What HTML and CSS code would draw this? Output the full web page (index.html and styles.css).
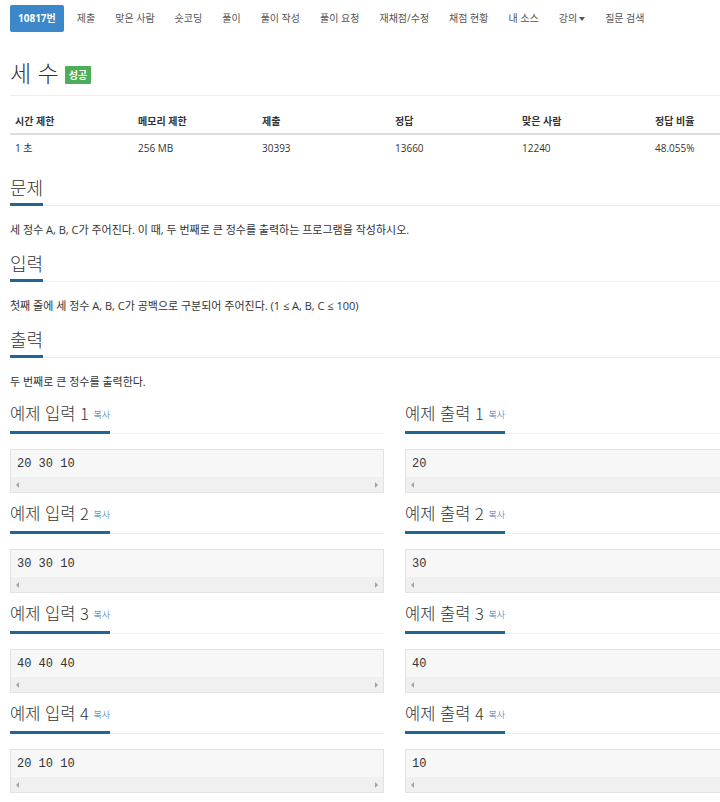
FILE: index.html
```html
<!DOCTYPE html>
<html lang="ko">
<head>
    <meta charset="UTF-8">
    <meta name="viewport" content="width=device-width, initial-scale=1.0">
    <title>세 수</title>
    <link rel="stylesheet" href="styles.css">
</head>
<body>
    <div class="page">
        <ul class="nav">
            <li class="active"><a href="#">10817번</a></li>
            <li><a href="#">제출</a></li>
            <li><a href="#">맞은 사람</a></li>
            <li><a href="#">숏코딩</a></li>
            <li><a href="#">풀이</a></li>
            <li><a href="#">풀이 작성</a></li>
            <li><a href="#">풀이 요청</a></li>
            <li><a href="#">재채점/수정</a></li>
            <li><a href="#">채점 현황</a></li>
            <li><a href="#">내 소스</a></li>
            <li><a href="#">강의<span class="caret"></span></a></li>
            <li><a href="#">질문 검색</a></li>
        </ul>

        <div class="page-header">
            <h1>세 수 <span class="label-success">성공</span></h1>
        </div>

        <table class="info">
            <thead>
                <tr>
                    <th class="c1">시간 제한</th>
                    <th class="c2">메모리 제한</th>
                    <th class="c3">제출</th>
                    <th class="c4">정답</th>
                    <th class="c5">맞은 사람</th>
                    <th>정답 비율</th>
                </tr>
            </thead>
            <tbody>
                <tr>
                    <td>1 초</td>
                    <td>256 MB</td>
                    <td>30393</td>
                    <td>13660</td>
                    <td>12240</td>
                    <td>48.055%</td>
                </tr>
            </tbody>
        </table>

        <section class="problem-section">
            <div class="headline"><h2>문제</h2></div>
            <p>세 정수 A, B, C가 주어진다. 이 때, 두 번째로 큰 정수를 출력하는 프로그램을 작성하시오.</p>
        </section>

        <section class="problem-section">
            <div class="headline"><h2>입력</h2></div>
            <p>첫째 줄에 세 정수 A, B, C가 공백으로 구분되어 주어진다. (1 ≤ A, B, C ≤ 100)</p>
        </section>

        <section class="problem-section">
            <div class="headline"><h2>출력</h2></div>
            <p>두 번째로 큰 정수를 출력한다.</p>
        </section>

        <div class="samples">
            <div class="sample">
                <div class="headline"><h2>예제 입력 1 <a class="copy" href="#">복사</a></h2></div>
                <div class="sample-box"><pre>20 30 10</pre><div class="scrollbar"><span class="arr-l"></span><span class="arr-r"></span></div></div>
            </div>
            <div class="sample">
                <div class="headline"><h2>예제 출력 1 <a class="copy" href="#">복사</a></h2></div>
                <div class="sample-box"><pre>20</pre><div class="scrollbar"><span class="arr-l"></span><span class="arr-r"></span></div></div>
            </div>
            <div class="sample">
                <div class="headline"><h2>예제 입력 2 <a class="copy" href="#">복사</a></h2></div>
                <div class="sample-box"><pre>30 30 10</pre><div class="scrollbar"><span class="arr-l"></span><span class="arr-r"></span></div></div>
            </div>
            <div class="sample">
                <div class="headline"><h2>예제 출력 2 <a class="copy" href="#">복사</a></h2></div>
                <div class="sample-box"><pre>30</pre><div class="scrollbar"><span class="arr-l"></span><span class="arr-r"></span></div></div>
            </div>
            <div class="sample">
                <div class="headline"><h2>예제 입력 3 <a class="copy" href="#">복사</a></h2></div>
                <div class="sample-box"><pre>40 40 40</pre><div class="scrollbar"><span class="arr-l"></span><span class="arr-r"></span></div></div>
            </div>
            <div class="sample">
                <div class="headline"><h2>예제 출력 3 <a class="copy" href="#">복사</a></h2></div>
                <div class="sample-box"><pre>40</pre><div class="scrollbar"><span class="arr-l"></span><span class="arr-r"></span></div></div>
            </div>
            <div class="sample">
                <div class="headline"><h2>예제 입력 4 <a class="copy" href="#">복사</a></h2></div>
                <div class="sample-box"><pre>20 10 10</pre><div class="scrollbar"><span class="arr-l"></span><span class="arr-r"></span></div></div>
            </div>
            <div class="sample">
                <div class="headline"><h2>예제 출력 4 <a class="copy" href="#">복사</a></h2></div>
                <div class="sample-box"><pre>10</pre><div class="scrollbar"><span class="arr-l"></span><span class="arr-r"></span></div></div>
            </div>
        </div>
    </div>
</body>
</html>
```
FILE: styles.css
```css
html, body {
    margin: 0;
    padding: 0;
    overflow: hidden;
}

body {
    font-family: "Open Sans", "Noto Sans CJK KR", sans-serif;
    font-size: 11px;
    color: #333;
    background-color: #fff;
}

.page {
    width: 710px;
    padding-left: 10px;
}

/* 상단 탭 */
.nav {
    list-style: none;
    margin: 0;
    padding: 5px 0 0;
    display: flex;
    height: 32px;
}

.nav li a,
.nav li a:hover,
.nav li a:visited {
    display: block;
    height: 27px;
    line-height: 27px;
    padding: 0 10px;
    color: #555;
    text-decoration: none;
    font-size: 10px;
    white-space: nowrap;
}

.nav li.active {
    margin-right: 3px;
}

.nav li.active a {
    background-color: #3b87c9;
    color: #fff;
    font-weight: bold;
    border-radius: 2px;
    padding: 0 8px;
}

.caret {
    display: inline-block;
    width: 0;
    height: 0;
    margin-left: 2px;
    vertical-align: middle;
    border-top: 4px solid #555;
    border-left: 3px solid transparent;
    border-right: 3px solid transparent;
}

/* 제목 */
.page-header {
    border-bottom: 1px solid #eee;
    padding-bottom: 8px;
    margin-top: 20px;
}

.page-header h1 {
    margin: 0;
    font-size: 23px;
    font-weight: 300;
    line-height: 30px;
    display: flex;
    align-items: center;
    gap: 6px;
    font-family: "Noto Sans CJK KR", sans-serif;
}

.label-success {
    display: inline-block;
    background-color: #4cae58;
    color: #fff;
    font-size: 10px;
    font-weight: bold;
    padding: 1px 4px;
    line-height: 16px;
    margin-top: 5px;
    border-radius: 1px;
}

/* 정보 표 */
.info {
    width: 710px;
    border-collapse: collapse;
    margin-top: 13px;
    font-size: 10px;
}

.info th {
    text-align: left;
    font-weight: bold;
    padding: 4px 5px 5px;
    border-bottom: 2px solid #ddd;
    color: #333;
}

.info td {
    padding: 5px 5px 6px;
}

.info .c1 { width: 113px; }
.info .c2 { width: 114px; }
.info .c3 { width: 123px; }
.info .c4 { width: 117px; }
.info .c5 { width: 123px; }

/* 섹션 */
.headline {
    border-bottom: 1px solid #eee;
    margin-top: 11px;
}

.headline h2 {
    display: inline-block;
    margin: 0 0 -1px;
    font-size: 18px;
    font-weight: 300;
    line-height: 28px;
    padding-bottom: 2px;
    border-bottom: 3px solid #1f6596;
    font-family: "Noto Sans CJK KR", sans-serif;
}

.problem-section:first-of-type .headline {
    margin-top: 12px;
}

.problem-section p {
    margin: 16px 0 0;
    line-height: 16px;
    font-size: 11px;
}

/* 예제 */
.samples {
    display: grid;
    grid-template-columns: 374px 374px;
    column-gap: 21px;
    overflow: hidden;
    margin-top: 3px;
}

.sample .headline {
    margin-top: 6px;
}

.sample .headline h2 {
    font-size: 16.5px;
}

.copy {
    font-size: 9px;
    color: #2a70b8;
    text-decoration: none;
    vertical-align: 2px;
}

.sample-box {
    margin-top: 15px;
    border: 1px solid #e3e3e3;
    background-color: #f7f7f7;
}

.sample-box pre {
    margin: 0;
    padding: 6px 6px 5px;
    font-family: "Liberation Mono", monospace;
    font-size: 12px;
    line-height: 16px;
    color: #333;
}

.scrollbar {
    height: 15px;
    background-color: #f0f0f0;
    display: flex;
    justify-content: space-between;
    align-items: center;
    padding: 0 5px;
}

.arr-l, .arr-r {
    width: 0;
    height: 0;
    border-top: 3px solid transparent;
    border-bottom: 3px solid transparent;
}

.arr-l {
    border-right: 3px solid #a3a3a3;
}

.arr-r {
    border-left: 3px solid #a3a3a3;
}
```
